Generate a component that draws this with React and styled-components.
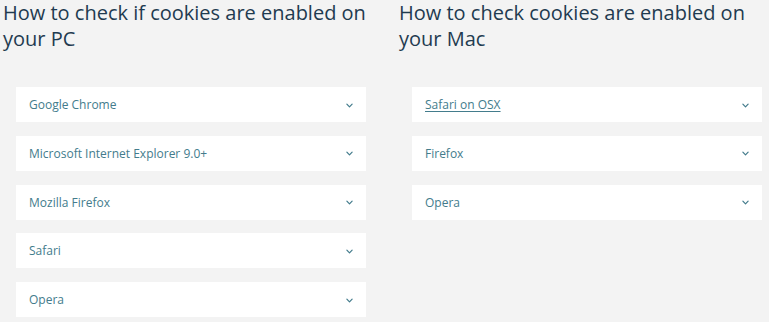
import React from "react";
import styled, { createGlobalStyle } from "styled-components";

const GlobalStyle = createGlobalStyle`
    html, body {
        margin: 0;
        padding: 0;
        background: #f3f3f3;
    }
    body {
        font-family: "Open Sans", "Liberation Sans", sans-serif;
    }
`;

const groups = [
    {
        title: "How to check if cookies are enabled on your PC",
        items: [
            "Google Chrome",
            "Microsoft Internet Explorer 9.0+",
            "Mozilla Firefox",
            "Safari",
            "Opera",
        ],
    },
    {
        title: "How to check cookies are enabled on your Mac",
        items: ["Safari on OSX", "Firefox", "Opera"],
        active: 0,
    },
];

const Chevron = () => (
    <ChevronIcon viewBox="0 0 8 5" width="7" height="5">
        <path d="M1 1 L4 4 L7 1" fill="none" stroke="currentColor" strokeWidth="1.4" strokeLinecap="round" strokeLinejoin="round" />
    </ChevronIcon>
);

const AccordionItem = ({ label, active }) => (
    <Item>
        <ItemLabel $active={active}>{label}</ItemLabel>
        <Chevron />
    </Item>
);

const App = () => {
    return (
        <>
            <GlobalStyle />
            <Page>
                {groups.map((g) => (
                    <Column key={g.title}>
                        <Heading>{g.title}</Heading>
                        <List>
                            {g.items.map((label, i) => (
                                <AccordionItem key={label} label={label} active={g.active === i} />
                            ))}
                        </List>
                    </Column>
                ))}
            </Page>
        </>
    );
};

export default App;

const Page = styled.div`
    display: grid;
    grid-template-columns: 383px 383px;
    column-gap: 13px;
    padding-left: 3px;
    height: 322px;
    overflow: hidden;
`;

const Column = styled.section`
    display: flex;
    flex-direction: column;
`;

const Heading = styled.h2`
    margin: 0;
    font-size: 20px;
    line-height: 26px;
    font-weight: 400;
    color: #1f3b50;
    width: 370px;
`;

const List = styled.div`
    display: flex;
    flex-direction: column;
    gap: 13.75px;
    margin-top: 35px;
    margin-left: 13px;
    width: 350px;
`;

const Item = styled.div`
    display: flex;
    align-items: center;
    justify-content: space-between;
    height: 35px;
    padding: 0 13px 0 13px;
    box-sizing: border-box;
    background: #ffffff;
`;

const ItemLabel = styled.span`
    font-size: 12px;
    color: #437c8c;
    text-decoration: ${(p) => (p.$active ? "underline" : "none")};
    text-underline-offset: 2px;
`;

const ChevronIcon = styled.svg`
    color: #437c8c;
    margin-top: 1px;
`;
